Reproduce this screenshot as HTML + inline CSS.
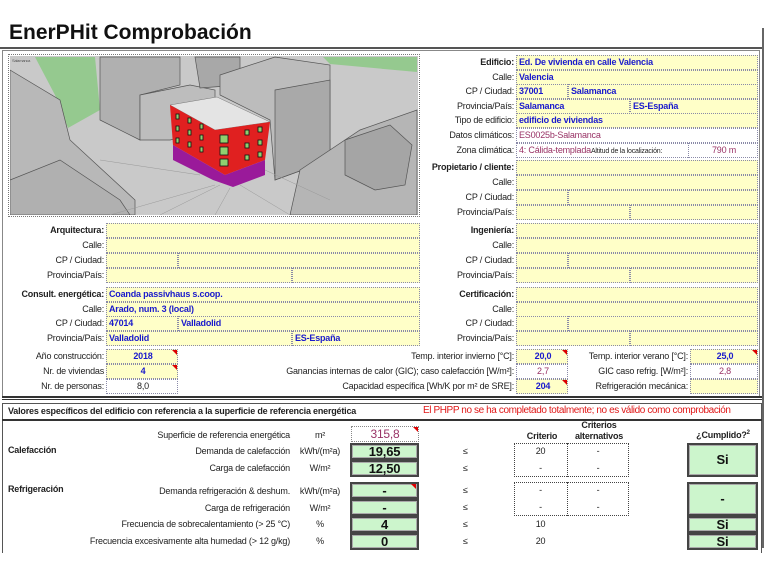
<!DOCTYPE html>
<html><head><meta charset="utf-8">
<style>
*{box-sizing:border-box;margin:0;padding:0}
body{width:768px;height:576px;background:#fff;position:relative;overflow:hidden;font-family:"Liberation Sans",sans-serif;font-size:9px;letter-spacing:-0.2px;color:#222}
div{position:absolute;white-space:nowrap}
.l{text-align:right;line-height:14px;height:14px}
.f{background:#ffffc8;border:1px dotted #8a8aa8;height:15px;line-height:13px;padding-left:2px;color:#1a1acc;font-weight:bold;font-size:9px}
.w{background:#fff}
.c{text-align:center}
.b{font-weight:bold;color:#222}
.g{background:#ccf5cc;border:2px solid #444;box-shadow:inset 0 0 0 1px #aaa;text-align:center;font-weight:bold;font-size:13px;color:#111}
.m{color:#993366}
.tri{border-top:5px solid #d00;border-left:5px solid transparent;width:0;height:0}
</style></head><body>
<div style="left:9px;top:21px;font-weight:bold;font-size:21px;letter-spacing:0;color:#111">EnerPHit Comprobación</div>
<div style="left:0;top:47px;width:762px;height:2px;background:#555"></div>
<div style="left:762px;top:28px;width:2px;height:520px;background:#666"></div>
<div style="left:2px;top:50px;width:758px;height:347px;border:1px solid #888"></div>

<div style="left:8px;top:54px;width:412px;height:163px;border:1px dotted #777"></div>
<svg style="position:absolute;left:10px;top:56px" width="408" height="159" viewBox="10 56 408 159">
<rect x="10" y="56" width="408" height="159" fill="#c9c9c9"/>
<polygon points="35,57 95,57 100,110 68,128 55,95" fill="#95c98f"/>
<polygon points="323,57 417,57 417,72 330,64" fill="#95c98f"/>
<polygon points="10,70 60,100 70,140 135,200 135,215 10,215" fill="#b8b8b8" stroke="#555" stroke-width=".7"/>
<polygon points="100,57 180,57 180,85 140,95 140,140 100,120" fill="#b0b0b0" stroke="#555" stroke-width=".7"/>
<polygon points="140,95 190,85 215,90 215,130 170,140 140,140" fill="#bdbdbd" stroke="#555" stroke-width=".7"/>
<polygon points="195,57 240,57 240,85 200,88" fill="#a8a8a8" stroke="#555" stroke-width=".7"/>
<polygon points="220,75 275,57 330,65 330,160 275,180 270,120 220,95" fill="#bcbcbc" stroke="#555" stroke-width=".7"/>
<polygon points="275,90 330,80 330,160 275,180" fill="#a9a9a9" stroke="#555" stroke-width=".7"/>
<polygon points="300,170 360,130 417,110 417,215 290,215" fill="#b5b5b5" stroke="#555" stroke-width=".7"/>
<polygon points="345,140 390,125 412,145 405,185 375,190 345,175" fill="#a5a5a5" stroke="#555" stroke-width=".7"/>
<polygon points="10,180 60,160 120,200 130,215 10,215" fill="#b0b0b0" stroke="#555" stroke-width=".7"/>
<g stroke="#999" stroke-width=".5"><line x1="215" y1="185" x2="110" y2="215"/><line x1="220" y1="185" x2="160" y2="215"/><line x1="230" y1="188" x2="215" y2="215"/><line x1="240" y1="185" x2="290" y2="215"/><line x1="200" y1="175" x2="100" y2="160"/><line x1="265" y1="170" x2="330" y2="200"/></g>
<polygon points="170,105 217,97 270,122 215,130" fill="#e4e4e4" stroke="#777" stroke-width=".5"/>
<polygon points="170,105 215,130 270,122 265,160 225,175 173,145" fill="#e02020"/>
<polygon points="173,145 225,175 265,160 265,175 233,187 213,180 173,160" fill="#9a1a9a"/>
<g fill="#8fcf6f" stroke="#111" stroke-width=".8">
<rect x="176" y="114" width="3" height="5"/><rect x="188" y="118" width="3" height="5"/><rect x="200" y="124" width="3" height="5"/>
<rect x="176" y="126" width="3" height="5"/><rect x="188" y="130" width="3" height="5"/><rect x="200" y="135" width="3" height="5"/>
<rect x="176" y="138" width="3" height="5"/><rect x="188" y="142" width="3" height="5"/><rect x="200" y="147" width="3" height="5"/>
<rect x="220" y="135" width="8" height="8"/><rect x="220" y="147" width="8" height="8"/><rect x="220" y="159" width="8" height="7"/>
<rect x="245" y="130" width="4" height="5"/><rect x="258" y="127" width="4" height="5"/><rect x="245" y="143" width="4" height="5"/><rect x="258" y="140" width="4" height="5"/><rect x="245" y="155" width="4" height="5"/><rect x="258" y="152" width="4" height="5"/>
</g>
<text x="12" y="62" font-size="4" fill="#555" font-family="Liberation Sans">Salamanca</text>
</svg>

<div class="l b" style="right:254px;top:55px">Edificio:</div><div class="f" style="left:516px;top:55px;width:242px">Ed. De vivienda en calle Valencia</div>
<div class="l" style="right:254px;top:70px">Calle:</div><div class="f" style="left:516px;top:70px;width:242px">Valencia</div>
<div class="l" style="right:254px;top:84px">CP / Ciudad:</div><div class="f" style="left:516px;top:84px;width:52px">37001</div><div class="f" style="left:568px;top:84px;width:190px">Salamanca</div>
<div class="l" style="right:254px;top:99px">Provincia/País:</div><div class="f" style="left:516px;top:99px;width:114px">Salamanca</div><div class="f" style="left:630px;top:99px;width:128px">ES-España</div>
<div class="l" style="right:254px;top:113px">Tipo de edificio:</div><div class="f" style="left:516px;top:113px;width:242px">edificio de viviendas</div>
<div class="l" style="right:254px;top:128px">Datos climáticos:</div><div class="f w m" style="left:516px;top:128px;width:242px;font-weight:normal">ES0025b-Salamanca</div>
<div class="l" style="right:254px;top:143px">Zona climática:</div><div class="f w m" style="left:516px;top:143px;width:242px;font-weight:normal">4: Cálida-templada<span style="color:#222;font-size:7px">Altitud de la localización:</span></div>
<div class="f w m" style="left:688px;top:143px;width:70px;text-align:center;font-weight:normal">790 m</div>
<div class="l b" style="right:254px;top:160px">Propietario / cliente:</div><div class="f" style="left:516px;top:160px;width:242px"></div>
<div class="l" style="right:254px;top:175px">Calle:</div><div class="f" style="left:516px;top:175px;width:242px"></div>
<div class="l" style="right:254px;top:190px">CP / Ciudad:</div><div class="f" style="left:516px;top:190px;width:52px"></div><div class="f" style="left:568px;top:190px;width:190px"></div>
<div class="l" style="right:254px;top:205px">Provincia/País:</div><div class="f" style="left:516px;top:205px;width:114px"></div><div class="f" style="left:630px;top:205px;width:128px"></div>

<div class="l b" style="right:664px;top:223px">Arquitectura:</div><div class="f" style="left:106px;top:223px;width:314px"></div>
<div class="l" style="right:664px;top:238px">Calle:</div><div class="f" style="left:106px;top:238px;width:314px"></div>
<div class="l" style="right:664px;top:253px">CP / Ciudad:</div><div class="f" style="left:106px;top:253px;width:72px"></div><div class="f" style="left:178px;top:253px;width:242px"></div>
<div class="l" style="right:664px;top:268px">Provincia/País:</div><div class="f" style="left:106px;top:268px;width:186px"></div><div class="f" style="left:292px;top:268px;width:128px"></div>
<div class="l b" style="right:664px;top:287px">Consult. energética:</div><div class="f" style="left:106px;top:287px;width:314px">Coanda passivhaus s.coop.</div>
<div class="l" style="right:664px;top:302px">Calle:</div><div class="f" style="left:106px;top:302px;width:314px">Arado, num. 3 (local)</div>
<div class="l" style="right:664px;top:316px">CP / Ciudad:</div><div class="f" style="left:106px;top:316px;width:72px">47014</div><div class="f" style="left:178px;top:316px;width:242px">Valladolid</div>
<div class="l" style="right:664px;top:331px">Provincia/País:</div><div class="f" style="left:106px;top:331px;width:186px">Valladolid</div><div class="f" style="left:292px;top:331px;width:128px">ES-España</div>
<div class="l b" style="right:254px;top:223px">Ingeniería:</div><div class="f" style="left:516px;top:223px;width:242px"></div>
<div class="l" style="right:254px;top:238px">Calle:</div><div class="f" style="left:516px;top:238px;width:242px"></div>
<div class="l" style="right:254px;top:253px">CP / Ciudad:</div><div class="f" style="left:516px;top:253px;width:52px"></div><div class="f" style="left:568px;top:253px;width:190px"></div>
<div class="l" style="right:254px;top:268px">Provincia/País:</div><div class="f" style="left:516px;top:268px;width:114px"></div><div class="f" style="left:630px;top:268px;width:128px"></div>
<div class="l b" style="right:254px;top:287px">Certificación:</div><div class="f" style="left:516px;top:287px;width:242px"></div>
<div class="l" style="right:254px;top:302px">Calle:</div><div class="f" style="left:516px;top:302px;width:242px"></div>
<div class="l" style="right:254px;top:316px">CP / Ciudad:</div><div class="f" style="left:516px;top:316px;width:52px"></div><div class="f" style="left:568px;top:316px;width:190px"></div>
<div class="l" style="right:254px;top:331px">Provincia/País:</div><div class="f" style="left:516px;top:331px;width:114px"></div><div class="f" style="left:630px;top:331px;width:128px"></div>

<div class="l" style="right:664px;top:349px">Año construcción:</div><div class="f c" style="left:106px;top:349px;width:72px">2018</div><div class="tri" style="left:172px;top:350px"></div>
<div class="l" style="right:664px;top:364px">Nr. de viviendas</div><div class="f c" style="left:106px;top:364px;width:72px">4</div><div class="tri" style="left:172px;top:365px"></div>
<div class="l" style="right:664px;top:379px">Nr. de personas:</div><div class="f w c" style="left:106px;top:379px;width:72px;color:#222;font-weight:normal">8,0</div>
<div class="l" style="right:254px;top:349px">Temp. interior invierno [°C]:</div><div class="f c" style="left:516px;top:349px;width:52px">20,0</div><div class="tri" style="left:562px;top:350px"></div>
<div class="l" style="right:254px;top:364px">Ganancias internas de calor (GIC); caso calefacción [W/m²]:</div><div class="f w c m" style="left:516px;top:364px;width:52px;font-weight:normal">2,7</div>
<div class="l" style="right:254px;top:379px">Capacidad específica [Wh/K por m² de SRE]:</div><div class="f c" style="left:516px;top:379px;width:52px">204</div><div class="tri" style="left:562px;top:380px"></div>
<div class="l" style="right:80px;top:349px">Temp. interior verano [°C]:</div><div class="f c" style="left:690px;top:349px;width:68px">25,0</div><div class="tri" style="left:752px;top:350px"></div>
<div class="l" style="right:80px;top:364px">GIC caso refrig. [W/m²]:</div><div class="f w c m" style="left:690px;top:364px;width:68px;font-weight:normal">2,8</div>
<div class="l" style="right:80px;top:379px">Refrigeración mecánica:</div><div class="f" style="left:690px;top:379px;width:68px"></div>
<div style="left:2px;top:396px;width:760px;height:4px;border-top:2px solid #333;border-bottom:1px solid #333"></div>

<div style="left:2px;top:403px;width:760px;height:150px;border:1px solid #555;border-bottom:none"></div>
<div style="left:2px;top:419px;width:760px;height:2px;background:#333"></div>
<div class="b" style="left:8px;top:406px;font-size:9px">Valores específicos del edificio con referencia a la superficie de referencia energética</div>
<div style="left:423px;top:405px;color:#e01818;font-size:10px;letter-spacing:-0.4px">El PHPP no se ha completado totalmente; no es válido como comprobación</div>

<div class="l" style="right:478px;top:428px">Superficie de referencia energética</div><div class="c" style="left:305px;width:30px;top:428px;line-height:14px">m²</div>
<div class="c m" style="left:351px;top:426px;width:68px;height:16px;border:1px dotted #888;font-size:12px;line-height:15px">315,8</div><div class="tri" style="left:413px;top:427px"></div>
<div class="b" style="left:8px;top:445px">Calefacción</div>
<div class="l" style="right:478px;top:444px">Demanda de calefacción</div><div class="c" style="left:298px;width:44px;top:444px;line-height:14px">kWh/(m²a)</div>
<div class="l" style="right:478px;top:461px">Carga de calefacción</div><div class="c" style="left:305px;width:30px;top:461px;line-height:14px">W/m²</div>
<div class="b" style="left:8px;top:484px">Refrigeración</div>
<div class="l" style="right:478px;top:484px">Demanda refrigeración &amp; deshum.</div><div class="c" style="left:298px;width:44px;top:484px;line-height:14px">kWh/(m²a)</div>
<div class="l" style="right:478px;top:501px">Carga de refrigeración</div><div class="c" style="left:305px;width:30px;top:501px;line-height:14px">W/m²</div>
<div class="l" style="right:478px;top:517px">Frecuencia de sobrecalentamiento (&gt; 25 °C)</div><div class="c" style="left:305px;width:30px;top:517px;line-height:14px">%</div>
<div class="l" style="right:478px;top:534px">Frecuencia excesivamente alta humedad (&gt; 12 g/kg)</div><div class="c" style="left:305px;width:30px;top:534px;line-height:14px">%</div>

<div class="g" style="left:350px;top:443px;width:69px;height:17px;line-height:13px">19,65</div>
<div class="g" style="left:350px;top:460px;width:69px;height:17px;line-height:13px">12,50</div>
<div class="g" style="left:350px;top:482px;width:69px;height:17px;line-height:13px">-</div><div class="tri" style="left:411px;top:484px"></div>
<div class="g" style="left:350px;top:499px;width:69px;height:17px;line-height:13px">-</div>
<div class="g" style="left:350px;top:516px;width:69px;height:17px;line-height:13px">4</div>
<div class="g" style="left:350px;top:533px;width:69px;height:17px;line-height:13px">0</div>

<div style="left:463px;top:446px">≤</div><div style="left:463px;top:463px">≤</div><div style="left:463px;top:485px">≤</div><div style="left:463px;top:502px">≤</div><div style="left:463px;top:519px">≤</div><div style="left:463px;top:536px">≤</div>

<div class="b c" style="left:518px;width:48px;top:431px">Criterio</div>
<div class="b c" style="left:568px;width:62px;top:420px;line-height:11px">Criterios<br>alternativos</div>
<div class="b c" style="left:688px;width:70px;top:430px">¿Cumplido?<sup style="font-size:6px">2</sup></div>
<div style="left:514px;top:443px;width:115px;height:34px;border:1px dotted #444"></div><div style="left:567px;top:443px;width:0;height:34px;border-left:1px dotted #444"></div>
<div style="left:514px;top:482px;width:115px;height:34px;border:1px dotted #444"></div><div style="left:567px;top:482px;width:0;height:34px;border-left:1px dotted #444"></div>
<div class="c" style="left:514px;width:53px;top:446px">20</div><div class="c" style="left:567px;width:62px;top:446px">-</div>
<div class="c" style="left:514px;width:53px;top:463px">-</div><div class="c" style="left:567px;width:62px;top:463px">-</div>
<div class="c" style="left:514px;width:53px;top:485px">-</div><div class="c" style="left:567px;width:62px;top:485px">-</div>
<div class="c" style="left:514px;width:53px;top:502px">-</div><div class="c" style="left:567px;width:62px;top:502px">-</div>
<div class="c" style="left:514px;width:53px;top:519px">10</div>
<div class="c" style="left:514px;width:53px;top:536px">20</div>

<div class="g" style="left:687px;top:443px;width:71px;height:34px;line-height:30px">Si</div>
<div class="g" style="left:687px;top:482px;width:71px;height:34px;line-height:30px">-</div>
<div class="g" style="left:687px;top:516px;width:71px;height:17px;line-height:13px">Si</div>
<div class="g" style="left:687px;top:533px;width:71px;height:17px;line-height:13px">Si</div>
</body></html>
